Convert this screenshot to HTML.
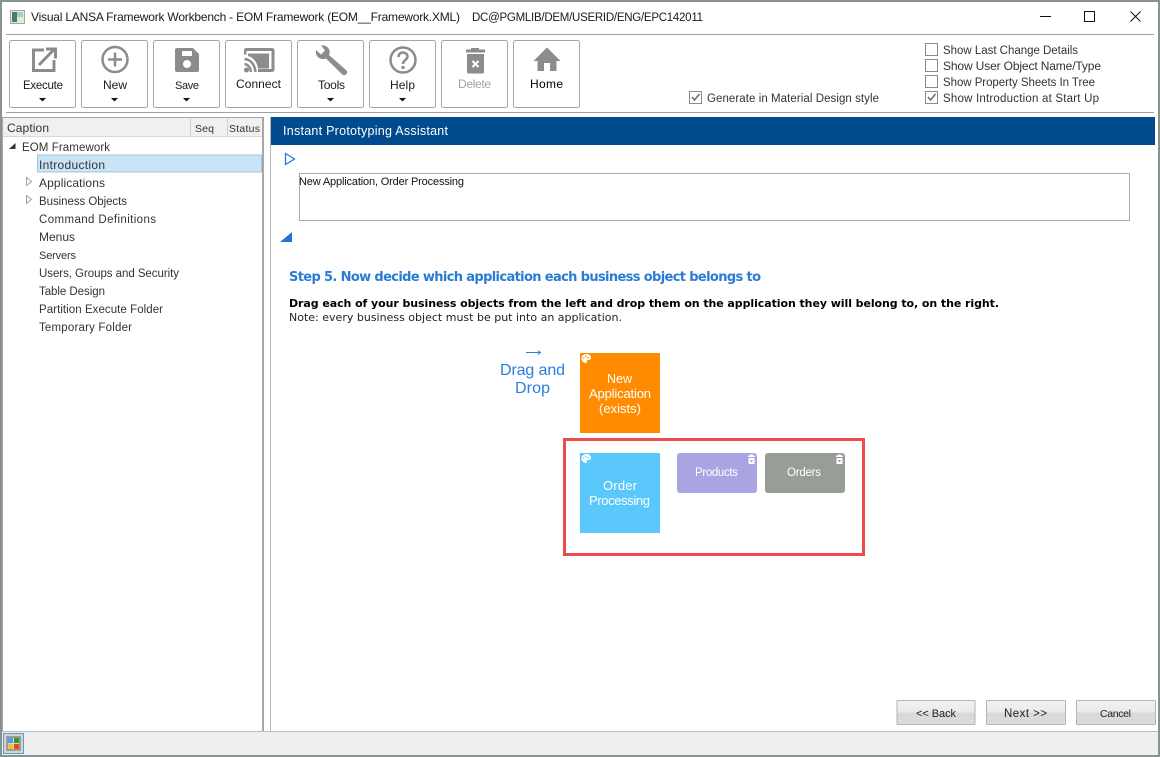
<!DOCTYPE html>
<html><head><meta charset="utf-8"><title>Visual LANSA Framework Workbench</title>
<style>
html,body{margin:0;padding:0;background:#fff;width:1160px;height:757px;overflow:hidden}
svg{display:block}
text{font-family:"Liberation Sans",sans-serif;font-size:12px;fill:#1a1a1a;white-space:pre}
.b{fill:#fff;stroke:#a6a6a6;stroke-width:1}
.i{fill:#8c8c8c}
.s{fill:none;stroke:#8c8c8c}
.c{fill:#fff;stroke:#8a8a8a;stroke-width:1}
.w{fill:#fff}
.v{font-family:"DejaVu Sans",sans-serif;font-size:11px;fill:#000}
</style></head><body>
<svg width="1160" height="757" viewBox="0 0 1160 757" xmlns="http://www.w3.org/2000/svg">
<defs><linearGradient id="g" x1="0" y1="0" x2="0" y2="1"><stop offset="0" stop-color="#f2f2f2"/><stop offset=".45" stop-color="#ebebeb"/><stop offset=".55" stop-color="#d8d8d8"/><stop offset="1" stop-color="#dcdcdc"/></linearGradient></defs>
<rect width="1160" height="757" fill="#fff"/>
<!-- title -->
<rect x="10.500" y="10.500" width="14" height="13" fill="#e8e8e8" stroke="#a5a5a5"/><rect x="12" y="12" width="5" height="10" fill="#4a7a78"/><rect x="17" y="12" width="6" height="5" fill="#a9cbc4"/><rect x="17" y="17" width="6" height="5" fill="#e4ecd0"/>
<text x="31" y="21" textLength="429" lengthAdjust="spacing">Visual LANSA Framework Workbench - EOM Framework (EOM__Framework.XML)</text>
<text x="472" y="21" textLength="231" lengthAdjust="spacing" style="font-size:11.500px">DC@PGMLIB/DEM/USERID/ENG/EPC142011</text>
<path d="M1040 16.500h11" stroke="#111" fill="none"/>
<rect x="1084.500" y="11.500" width="10" height="10" fill="none" stroke="#111"/>
<path d="M1130.500 11.500l10 10M1140.500 11.500l-10 10" stroke="#111" fill="none"/>
<rect x="6" y="34" width="1148" height="1" fill="#a0a0a0"/>
<!-- toolbar buttons -->
<rect class="b" x="9.500" y="40.500" width="66" height="67" rx="2"/>
<rect class="b" x="81.500" y="40.500" width="66" height="67" rx="2"/>
<rect class="b" x="153.500" y="40.500" width="66" height="67" rx="2"/>
<rect class="b" x="225.500" y="40.500" width="66" height="67" rx="2"/>
<rect class="b" x="297.500" y="40.500" width="66" height="67" rx="2"/>
<rect class="b" x="369.500" y="40.500" width="66" height="67" rx="2"/>
<rect class="b" x="441.500" y="40.500" width="66" height="67" rx="2"/>
<rect class="b" x="513.500" y="40.500" width="66" height="67" rx="2"/>
<!-- execute icon -->
<path class="s" stroke-width="3" d="M44 50H33.500v20.500H54V60M39 65l14.500-15M46 49h9.500v9.500"/>
<!-- new icon -->
<circle class="s" stroke-width="2.500" cx="115" cy="59.500" r="12.500"/><path class="s" stroke-width="2.500" d="M115 52.500v14M108 59.500h14"/>
<!-- save icon -->
<path class="i" fill-rule="evenodd" d="M177 48h16l6 6v16a2 2 0 0 1-2 2h-20a2 2 0 0 1-2-2V50a2 2 0 0 1 2-2zm5 3v5h10v-5zm5 9a4 4 0 1 0 0 8 4 4 0 0 0 0-8z"/>
<!-- connect icon -->
<path class="i" fill-rule="evenodd" d="M246 48h26a2.500 2.500 0 0 1 2.500 2.500v19a2.500 2.500 0 0 1-2.500 2.500h-14v-3h13.500V51h-25v3.500H244V50.500a2.500 2.500 0 0 1 2-2.500zm2 5.500h21v15h-11c-1-7-5-11-10-12.500z"/>
<path class="s" stroke-width="2.500" d="M244.500 59c6 .5 10 5 11 13M244.500 64c3.500.500 6 3.500 6.500 8"/><circle class="i" cx="246.500" cy="70" r="2.500"/>
<!-- tools icon -->
<path class="i" d="M321 45.500c3-.5 6 .5 7.500 3 1.500 2 1.500 4.500.5 6.500L346 70c1.500 1.500 1.500 3 .3 4.200-1.300 1.300-3 1.300-4.300 0L326 58.500c-2.500 1-5.500.8-7.500-1-2.300-2-3-4.500-2.500-7.500l5 4.500 4-4z"/>
<!-- help icon -->
<circle class="s" stroke-width="2.500" cx="403" cy="60" r="12.500"/>
<path class="s" stroke-width="2.500" d="M398.500 57c0-3 2-4.500 4.500-4.500s4.500 1.700 4.500 4c0 3.500-4.500 3.500-4.500 7.500"/><rect class="i" x="401.500" y="66" width="3" height="3"/>
<!-- delete icon -->
<path class="i" fill-rule="evenodd" d="M471 48h8v1.500h6v3h-19v-3h5zM467 54h17v18a1.500 1.500 0 0 1-1.500 1.500h-14A1.500 1.500 0 0 1 467 72z"/>
<path d="M472.500 61l6 6M478.500 61l-6 6" stroke="#fff" stroke-width="2" fill="none"/>
<!-- home icon -->
<path class="i" d="M547 47.500l13.500 13.500h-4V71h-6.500v-8h-6v8h-6.500v-10h-4z"/>
<!-- labels -->
<text x="23" y="89" textLength="40" lengthAdjust="spacing" style="font-size:11.500px">Execute</text>
<text x="103" y="89" textLength="24" lengthAdjust="spacing">New</text>
<text x="175" y="89" textLength="24" lengthAdjust="spacing" style="font-size:11px">Save</text>
<text x="236" y="88" textLength="45" lengthAdjust="spacing">Connect</text>
<text x="318" y="89" textLength="27" lengthAdjust="spacing">Tools</text>
<text x="390" y="89" textLength="25" lengthAdjust="spacing">Help</text>
<text x="458" y="88" textLength="33" lengthAdjust="spacing" style="fill:#a3a3a3">Delete</text>
<text x="530" y="88" textLength="33" lengthAdjust="spacing" style="fill:#000">Home</text>
<path d="M39 98h7l-3.500 3.500zM111 98h7l-3.500 3.500zM183 98h7l-3.500 3.500zM327 98h7l-3.500 3.500zM399 98h7l-3.500 3.500z" fill="#111"/>
<!-- checkboxes -->
<rect class="c" x="925.500" y="43.500" width="12" height="12"/>
<rect class="c" x="925.500" y="59.500" width="12" height="12"/>
<rect class="c" x="925.500" y="75.500" width="12" height="12"/>
<rect class="c" x="925.500" y="91.500" width="12" height="12"/>
<path d="M928 97l2.500 3 5-6" fill="none" stroke="#6a6a6a" stroke-width="1.500"/>
<rect class="c" x="689.500" y="91.500" width="12" height="12"/>
<path d="M692 97l2.500 3 5-6" fill="none" stroke="#6a6a6a" stroke-width="1.500"/>
<text x="943" y="54" textLength="135" lengthAdjust="spacing" style="fill:#333;font-size:11.500px">Show Last Change Details</text>
<text x="943" y="70" textLength="158" lengthAdjust="spacing" style="fill:#333">Show User Object Name/Type</text>
<text x="943" y="86" textLength="152" lengthAdjust="spacing" style="fill:#333;font-size:11.500px">Show Property Sheets In Tree</text>
<text x="943" y="102" textLength="156" lengthAdjust="spacing" style="fill:#333;font-size:11.500px">Show Introduction at Start Up</text>
<text x="707" y="102" textLength="172" lengthAdjust="spacing" style="fill:#333;font-size:11.500px">Generate in Material Design style</text>
<rect x="6" y="112" width="1148" height="1" fill="#a0a0a0"/>
<!-- left panel -->
<rect x="2" y="117" width="1" height="614" fill="#a8a8a8"/>
<rect x="262" y="117" width="2" height="614" fill="#a8a8a8"/>
<rect x="2" y="117" width="261" height="1" fill="#a8a8a8"/>
<rect x="3" y="118" width="259" height="18" fill="#f0f0f0"/>
<rect x="3" y="136" width="259" height="1" fill="#d8d8d8"/>
<rect x="190" y="118" width="1" height="18" fill="#cfcfcf"/>
<rect x="227" y="118" width="1" height="18" fill="#cfcfcf"/>
<text x="7" y="132" textLength="42" lengthAdjust="spacing" style="fill:#333">Caption</text>
<text x="195" y="132" textLength="19" lengthAdjust="spacing" style="fill:#333;font-size:10.500px">Seq</text>
<text x="229" y="132" textLength="31" lengthAdjust="spacing" style="fill:#333;font-size:10.500px">Status</text>
<path d="M9 149l6.500-6v6z" fill="#333"/>
<text x="22" y="151" textLength="88" lengthAdjust="spacing" style="fill:#333;font-size:11.500px">EOM Framework</text>
<rect x="37.500" y="155" width="224" height="17" fill="#c9e5f5" stroke="#a9c4d6"/>
<text x="39" y="169" textLength="66" lengthAdjust="spacing" style="fill:#333">Introduction</text>
<path d="M26.500 177.500l5 4-5 4z M26.500 195.500l5 4-5 4z" fill="#fff" stroke="#a0a0a0"/>
<text x="39" y="187" textLength="66" lengthAdjust="spacing" style="fill:#333">Applications</text>
<text x="39" y="205" textLength="88" lengthAdjust="spacing" style="fill:#333;font-size:11.500px">Business Objects</text>
<text x="39" y="223" textLength="117" lengthAdjust="spacing" style="fill:#333;font-size:11.500px">Command Definitions</text>
<text x="39" y="241" textLength="36" lengthAdjust="spacing" style="fill:#333">Menus</text>
<text x="39" y="259" textLength="37" lengthAdjust="spacing" style="fill:#333;font-size:11px">Servers</text>
<text x="39" y="277" textLength="140" lengthAdjust="spacing" style="fill:#333;font-size:11.500px">Users, Groups and Security</text>
<text x="39" y="295" textLength="66" lengthAdjust="spacing" style="fill:#333;font-size:11.500px">Table Design</text>
<text x="39" y="313" textLength="124" lengthAdjust="spacing" style="fill:#333;font-size:11.500px">Partition Execute Folder</text>
<text x="39" y="331" textLength="93" lengthAdjust="spacing" style="fill:#333;font-size:11.500px">Temporary Folder</text>
<!-- right panel -->
<rect x="270" y="117" width="1" height="614" fill="#b8b8b8"/>
<rect x="271" y="117" width="884" height="28" fill="#004b8d"/>
<text x="283" y="135" textLength="165" lengthAdjust="spacing" style="fill:#fff;font-size:12.500px">Instant Prototyping Assistant</text>
<path d="M285.500 153.500l9 5.500-9 5.500z" fill="#fff" stroke="#2a78d8" stroke-width="1.300"/>
<rect x="299.500" y="173.500" width="830" height="47" fill="#fff" stroke="#aaa"/>
<text x="299" y="185" textLength="165" lengthAdjust="spacing" style="font-size:11px;fill:#111">New Application, Order Processing</text>
<path d="M292 232v10h-12z" fill="#1f74d4"/>
<text x="289" y="281" textLength="472" lengthAdjust="spacing" style="font-family:'DejaVu Sans',sans-serif;font-weight:bold;font-size:13px;fill:#2a7bd4">Step 5. Now decide which application each business object belongs to</text>
<text class="v" x="289" y="307" textLength="710" lengthAdjust="spacing" style="font-weight:bold">Drag each of your business objects from the left and drop them on the application they will belong to, on the right.</text>
<text class="v" x="289" y="321" textLength="333" lengthAdjust="spacing" style="fill:#222">Note: every business object must be put into an application.</text>
<!-- drag and drop -->
<path d="M526 352.500h14M538 350.500l2.500 2-2.500 2" fill="none" stroke="#2a7de1"/>
<text x="500" y="375" textLength="65" lengthAdjust="spacing" style="font-size:16px;fill:#2a7de1">Drag and</text>
<text x="515" y="393" textLength="35" lengthAdjust="spacing" style="font-size:16px;fill:#2a7de1">Drop</text>
<rect x="580" y="353" width="80" height="80" fill="#ff8c00"/>
<path class="w" fill-rule="evenodd" d="M586.500 354c2.800 0 4.500 1.800 4.500 3.700 0 1.500-1.200 2.300-2.500 2.300h-.8c-.8 0-1.200.6-.9 1.300.4.900 0 1.700-.9 1.700-2.300 0-4.400-2-4.400-4.500s2-4.500 5-4.500zm-2.800 3.200a.8.8 0 1 0 0 1.600.8.8 0 0 0 0-1.600zm2-1.700a.8.8 0 1 0 0 1.600.8.8 0 0 0 0-1.600zm2.600 1.500a.8.8 0 1 0 0 1.600.8.8 0 0 0 0-1.600z"/>
<text x="607" y="383" textLength="25" lengthAdjust="spacing" style="fill:#fff;font-size:12.500px">New</text>
<text x="589" y="398" textLength="62" lengthAdjust="spacing" style="fill:#fff;font-size:13px">Application</text>
<text x="599" y="413" textLength="42" lengthAdjust="spacing" style="fill:#fff;font-size:13px">(exists)</text>
<rect x="564.500" y="439.500" width="299" height="115" fill="#fff" stroke="#ee4c4c" stroke-width="3"/>
<rect x="580" y="453" width="80" height="80" fill="#5ac8fa"/>
<path class="w" fill-rule="evenodd" d="M586.500 454c2.800 0 4.500 1.800 4.500 3.700 0 1.500-1.200 2.300-2.500 2.300h-.8c-.8 0-1.200.6-.9 1.300.4.900 0 1.700-.9 1.700-2.300 0-4.400-2-4.400-4.500s2-4.500 5-4.500zm-2.800 3.200a.8.8 0 1 0 0 1.600.8.8 0 0 0 0-1.600zm2-1.700a.8.8 0 1 0 0 1.600.8.8 0 0 0 0-1.600zm2.600 1.500a.8.8 0 1 0 0 1.600.8.8 0 0 0 0-1.600z"/>
<text x="603" y="490" textLength="34" lengthAdjust="spacing" style="fill:#fff;font-size:13px">Order</text>
<text x="589" y="505" textLength="61" lengthAdjust="spacing" style="fill:#fff;font-size:13px">Processing</text>
<rect x="677" y="453" width="80" height="40" rx="3" fill="#a9a5e3"/>
<rect x="765" y="453" width="80" height="40" rx="3" fill="#989d97"/>
<path class="w" fill-rule="evenodd" d="M750 454.500h3v1h2v1.500h-7v-1.500h2zM748.500 458h6v6h-6zM750.500 460v2h2v-2z"/>
<path class="w" fill-rule="evenodd" d="M838 454.500h3v1h2v1.500h-7v-1.500h2zM836.500 458h6v6h-6zM838.500 460v2h2v-2z"/>
<text x="695" y="476" textLength="43" lengthAdjust="spacing" style="font-size:11.500px;fill:#fff">Products</text>
<text x="787" y="476" textLength="34" lengthAdjust="spacing" style="font-size:11.500px;fill:#fff">Orders</text>
<!-- bottom buttons -->
<rect x="897" y="700.500" width="78" height="24" rx="1" fill="url(#g)" stroke="#b5b5b5"/>
<rect x="986.500" y="700.500" width="79" height="24" rx="1" fill="url(#g)" stroke="#b5b5b5"/>
<rect x="1076.500" y="700.500" width="79" height="24" rx="1" fill="url(#g)" stroke="#b5b5b5"/>
<text x="916" y="717" textLength="40" lengthAdjust="spacing" style="fill:#222;font-size:11px">&lt;&lt; Back</text>
<text x="1004" y="717" textLength="43" lengthAdjust="spacing" style="fill:#222;font-size:11.500px">Next &gt;&gt;</text>
<text x="1100" y="717" textLength="31" lengthAdjust="spacing" style="fill:#222;font-size:10.500px">Cancel</text>
<!-- status bar -->
<rect x="2" y="731" width="1156" height="24" fill="#efefef"/>
<rect x="2" y="731" width="1156" height="1" fill="#bdbdbd"/>
<rect x="3.500" y="733.500" width="20" height="20" fill="#d4d4d4" stroke="#5a9ecb"/>
<rect x="7" y="737" width="13" height="13" fill="none" stroke="#666"/>
<rect x="8" y="738" width="5" height="5" fill="#4aa3ee"/><rect x="14" y="738" width="5" height="5" fill="#2aa02a"/>
<rect x="8" y="744" width="5" height="5" fill="#f2c230"/><rect x="14" y="744" width="5" height="5" fill="#f04a10"/>
<!-- window border -->
<rect x="1" y="1" width="1158" height="755" fill="none" stroke="#87938d" stroke-width="2"/>
</svg>
</body></html>
